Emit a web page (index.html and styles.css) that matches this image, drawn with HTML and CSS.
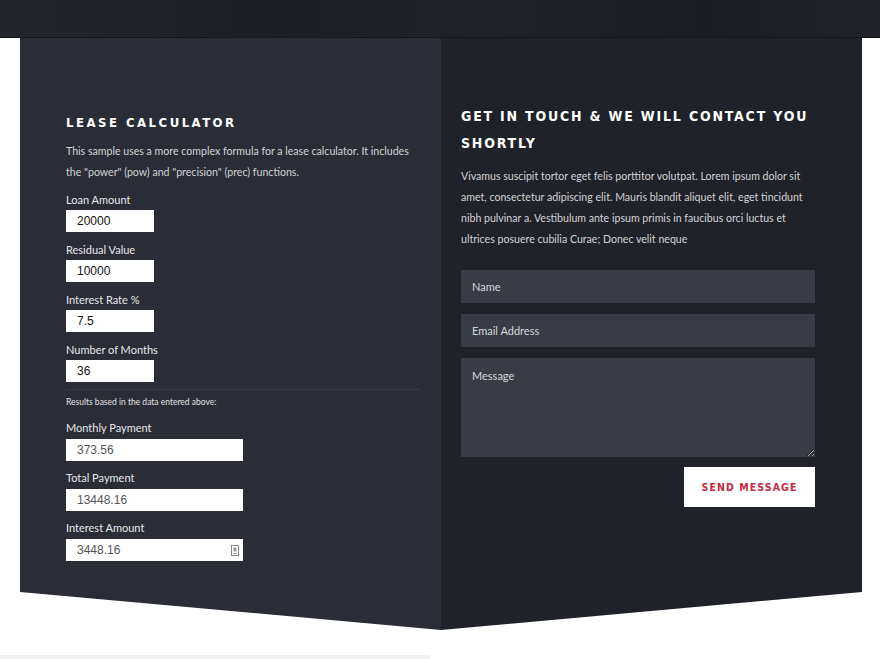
FILE: index.html
```html
<!DOCTYPE html>
<html lang="en">
<head>
<meta charset="utf-8">
<title>Lease Calculator</title>
<link rel="stylesheet" href="styles.css">
</head>
<body>
<div class="topbar"></div>
<main class="card">
  <section class="col calc">
    <h2 class="title">LEASE CALCULATOR</h2>
    <p class="intro">This sample uses a more complex formula for a lease calculator. It includes the "power" (pow) and "precision" (prec) functions.</p>
    <div class="field"><label>Loan Amount</label><input class="num" value="20000"></div>
    <div class="field"><label>Residual Value</label><input class="num" value="10000"></div>
    <div class="field"><label>Interest Rate %</label><input class="num" value="7.5"></div>
    <div class="field"><label>Number of Months</label><input class="num" value="36"></div>
    <hr class="rule">
    <p class="note">Results based in the data entered above:</p>
    <div class="field result"><label>Monthly Payment</label><div class="out">373.56</div></div>
    <div class="field result"><label>Total Payment</label><div class="out">13448.16</div></div>
    <div class="field result"><label>Interest Amount</label><div class="out">3448.16<svg class="card-ico" width="8" height="11" viewBox="0 0 8 11"><rect x="0.5" y="0.5" width="7" height="10" fill="none" stroke="#888" stroke-width="1"/><rect x="2.5" y="2.5" width="3" height="4" fill="#999"/><line x1="2" y1="8.5" x2="6" y2="8.5" stroke="#999" stroke-width="1"/></svg></div></div>
  </section>
  <section class="col contact">
    <h2 class="title big">GET IN TOUCH &amp; WE WILL CONTACT YOU SHORTLY</h2>
    <p class="intro">Vivamus suscipit tortor eget felis porttitor volutpat. Lorem ipsum dolor sit amet, consectetur adipiscing elit. Mauris blandit aliquet elit, eget tincidunt nibh pulvinar a. Vestibulum ante ipsum primis in faucibus orci luctus et ultrices posuere cubilia Curae; Donec velit neque</p>
    <form class="cform">
      <input class="cin" placeholder="Name">
      <input class="cin" placeholder="Email Address">
      <textarea class="cin msg" placeholder="Message"></textarea>
      <div class="actions"><button type="button" class="send">SEND MESSAGE</button></div>
    </form>
  </section>
</main>
<div class="footstrip"></div>
</body>
</html>
```
FILE: styles.css
```css
* { box-sizing: border-box; }
html, body { margin: 0; padding: 0; }
body {
  background: #ffffff;
  font-family: Lato, "Open Sans", sans-serif;
  width: 880px;
  height: 659px;
  overflow: hidden;
}
.topbar {
  height: 38px;
  background: linear-gradient(90deg, #23262c 0%, #1c1e24 30%, #1f2228 55%, #1b1d23 80%, #202328 100%);
  border-bottom: 1px solid #15171b;
}
.card {
  margin: 0 18px 0 20px;
  height: 592px;
  display: grid;
  grid-template-columns: 1fr 1fr;
  clip-path: polygon(0 0, 100% 0, 100% 554px, 50% 592px, 0 554px);
}
.col { min-width: 0; }
.calc {
  background: #2a2d35;
  padding: 75px 21px 0 46px;
}
.contact {
  background: #202229;
  padding: 65px 40px 0 20px;
}
.title {
  margin: 0 0 8px;
  font-family: "DejaVu Sans Condensed", "DejaVu Sans", sans-serif;
  font-weight: 700;
  font-size: 13px;
  line-height: 20px;
  letter-spacing: 2.5px;
  color: #ffffff;
}
.title.big {
  font-size: 14px;
  line-height: 27px;
  letter-spacing: 1.8px;
  margin-bottom: 9px;
}
.intro {
  margin: 0 0 9px;
  font-size: 10.6px;
  line-height: 21px;
  color: #d2d3d6;
}
.contact .intro { margin-bottom: 20px; margin-right: 7px; }
.field { margin-bottom: 10px; }
.field label {
  display: block;
  font-size: 11px;
  line-height: 16px;
  color: #e6e7ea;
  margin-bottom: 2px;
}
.num, .out {
  display: block;
  width: 88px;
  height: 22px;
  border: 0;
  outline: 0;
  background: #ffffff;
  padding: 0 11px;
  font-family: "Liberation Sans", Arial, sans-serif;
  font-size: 12px;
  line-height: 22px;
  color: #111;
}
.result { margin-bottom: 9px; }
.result label { margin-bottom: 3px; }
.out {
  width: 177px;
  color: #555;
  display: flex;
  align-items: center;
  justify-content: space-between;
  padding-right: 4px;
}
.card-ico { display: block; }
.rule {
  border: 0;
  height: 1px;
  background: rgba(255,255,255,0.07);
  margin: -3px 0 0;
}
.note {
  margin: 5px 0 11px;
  font-size: 8.5px;
  line-height: 14px;
  color: #e0e0e3;
}
.cform {
  display: flex;
  flex-direction: column;
  gap: 11px;
  margin-right: 7px;
}
.cin {
  display: block;
  width: 100%;
  height: 33px;
  border: 0;
  outline: 0;
  background: #3a3c45;
  padding: 0 11px;
  font-family: Lato, sans-serif;
  font-size: 11px;
  color: #e0e0e0;
}
.cin::placeholder { color: #d6d7da; }
.msg {
  height: 99px;
  padding: 11px;
  resize: vertical;
}
.actions {
  display: flex;
  justify-content: flex-end;
  margin-top: -1px;
}
.send {
  width: 131px;
  height: 40px;
  border: 0;
  background: #ffffff;
  color: #c42c3c;
  font-family: "DejaVu Sans Condensed", "DejaVu Sans", sans-serif;
  font-weight: 700;
  font-size: 10.5px;
  letter-spacing: 1.1px;
  padding: 0;
}
.footstrip {
  margin-top: 25px;
  width: 430px;
  height: 5px;
  background: #f1f1f2;
}
```
